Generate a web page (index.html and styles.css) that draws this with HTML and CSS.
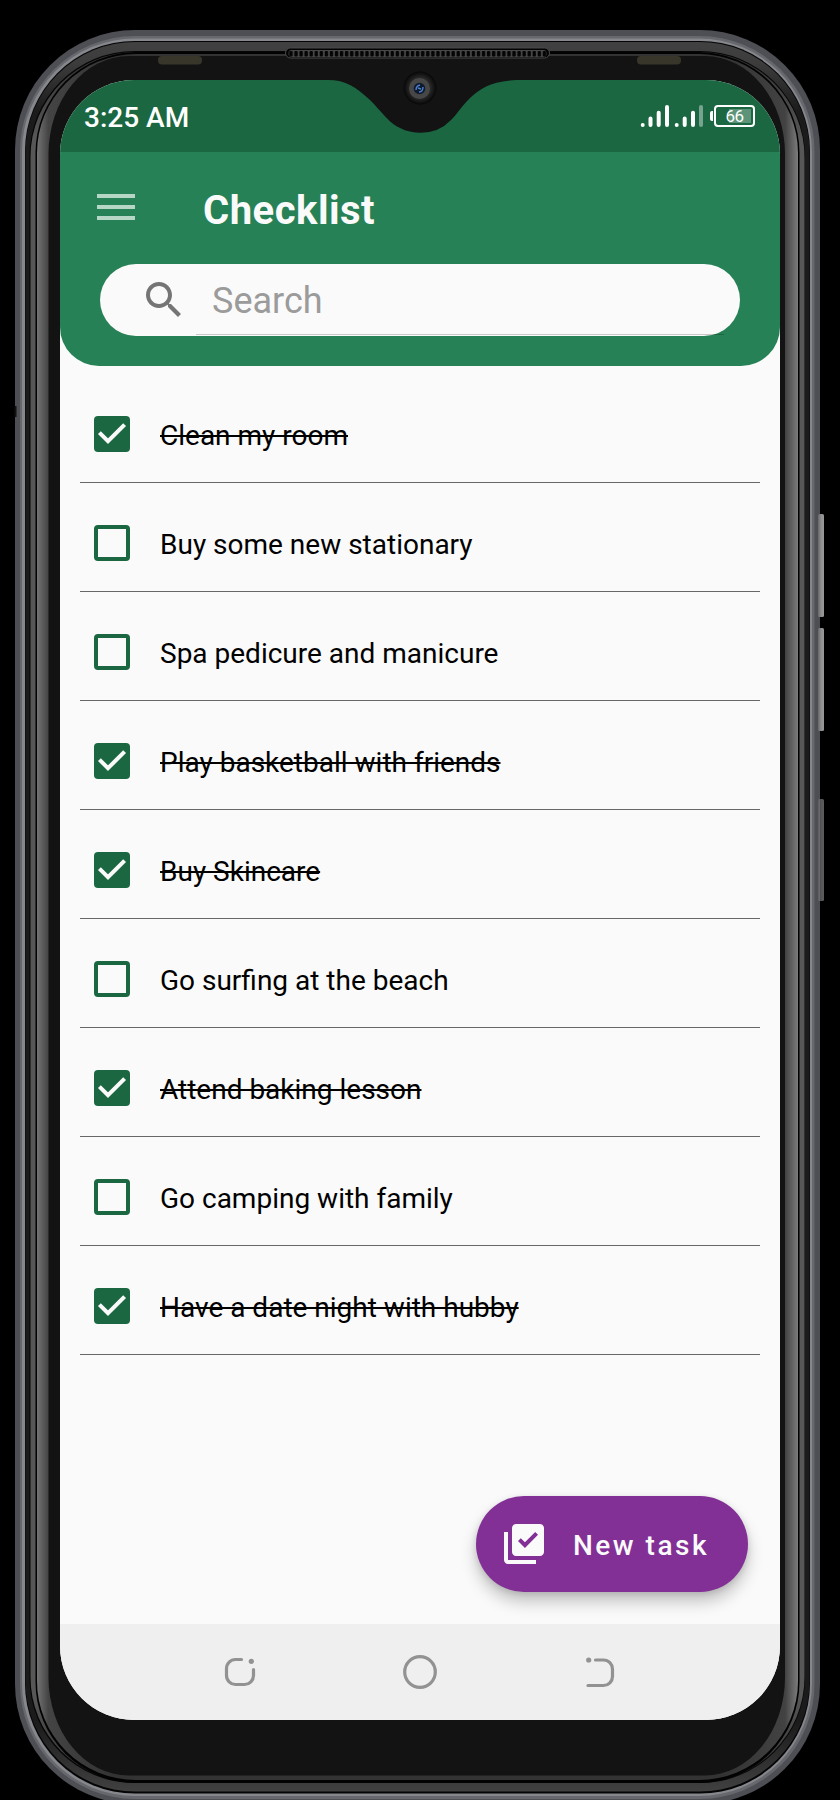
FILE: index.html
```html
<!DOCTYPE html>
<html lang="en">
<head>
<meta charset="utf-8">
<title>Checklist</title>
<link rel="stylesheet" href="styles.css">
</head>
<body>
<div class="phone">
  <svg class="frame" viewBox="0 0 840 1800" aria-hidden="true">
    <defs>
      <linearGradient id="rail" x1="0" y1="0" x2="0" y2="1"><stop offset="0" stop-color="#414141"/><stop offset=".012" stop-color="#3c3c3c"/><stop offset=".04" stop-color="#1b1b1b"/><stop offset=".96" stop-color="#1b1b1b"/><stop offset="1" stop-color="#404040"/></linearGradient>
      <linearGradient id="ring" x1="0" y1="0" x2="0" y2="1"><stop offset="0" stop-color="#303030"/><stop offset=".05" stop-color="#575757"/><stop offset=".95" stop-color="#575757"/><stop offset="1" stop-color="#303030"/></linearGradient>
      <linearGradient id="bevel" x1="0" y1="0" x2="1" y2="0"><stop offset="0" stop-color="#747474"/><stop offset=".015" stop-color="#444"/><stop offset=".1" stop-color="#333"/><stop offset=".9" stop-color="#333"/><stop offset=".983" stop-color="#424242"/><stop offset="1" stop-color="#7c7c7c"/></linearGradient>
      <linearGradient id="key" x1="0" y1="0" x2="1" y2="0"><stop offset="0" stop-color="#666"/><stop offset=".5" stop-color="#8e8e8e"/><stop offset="1" stop-color="#999"/></linearGradient>
      <radialGradient id="cam"><stop offset=".5" stop-color="#333"/><stop offset="1" stop-color="#070707"/></radialGradient>
      <pattern id="mesh" x="288.5" y="50" width="5.07" height="8" patternUnits="userSpaceOnUse"><rect width="5.07" height="8" fill="#474747"/><rect x=".7" y="1" width="3.4" height="5.4" rx="1" fill="#050505"/></pattern>
    </defs>
    <rect x="15" y="30" width="805" height="1774" rx="120" fill="#4e4f54"/>
    <rect x="20" y="36" width="794.5" height="1763" rx="115" fill="#66686e"/>
    <rect x="22" y="38.5" width="790" height="1757.5" rx="113" fill="#85878c"/>
    <g fill="url(#key)"><rect x="818" y="514" width="6" height="103" rx="1.5"/><rect x="818" y="628" width="6" height="103" rx="1.5"/><rect x="818" y="799" width="6" height="102" rx="1.5" opacity=".6"/></g>
    <rect x="25" y="41" width="785" height="1752.500" rx="110" fill="#050505"/>
    <rect x="25.500" y="42" width="784" height="1749.500" rx="110" fill="url(#rail)"/>
    <rect x="29.500" y="51" width="775.500" height="1732" rx="105" fill="#060606"/>
    <rect x="30.500" y="52" width="774" height="1730" rx="105" fill="url(#ring)"/>
    <rect x="35.500" y="52" width="764" height="1731" rx="101" fill="#020202"/>
    <rect x="37" y="54" width="761" height="1726" rx="99" fill="url(#bevel)"/>
    <rect x="48.500" y="56" width="736.500" height="1719.500" rx="80" ry="98" fill="#131313"/>
    <path d="M14.500 406h2v11h-2z" fill="#111"/>
    <g fill="#38362a"><rect x="158" y="56" width="44" height="8.500" rx="4"/><rect x="637" y="56" width="44" height="8.500" rx="4"/></g>
    <rect x="285.500" y="48" width="264" height="10" rx="5" fill="#030303" stroke="#4a4a4a"/>
    <rect x="288.500" y="50" width="258" height="7" rx="3" fill="url(#mesh)"/>
  </svg>

  <main class="screen">
    <header class="status">
      <span class="clock">3:25 AM</span>
      <div class="indicators">
        <svg class="signal" viewBox="0 0 64 24" aria-hidden="true"><g stroke="#fff" stroke-width="4" stroke-linecap="round"><path d="M3.700 21v.01M11.500 14.500V21M19.700 8.700V21M28 3V21M37.700 21v.01M45.700 14.500V21M54 8.700V21"/><path d="M62 3V21" opacity=".4"/></g></svg>
        <span class="battery">66</span>
      </div>
    </header>

    <section class="appbar">
      <div class="title-row">
        <div class="menu"><i></i><i></i><i></i></div>
        <h1 class="title">Checklist</h1>
      </div>
      <div class="search">
        <svg class="glass" viewBox="0 0 24 24" aria-hidden="true"><path d="M15.500 14h-.79l-.28-.27C15.410 12.590 16 11.110 16 9.500 16 5.910 13.090 3 9.500 3S3 5.910 3 9.500 5.910 16 9.500 16c1.610 0 3.090-.59 4.230-1.570l.27.28v.79l5 4.990L20.490 19l-4.990-5zm-6 0C7.010 14 5 11.990 5 9.500S7.010 5 9.500 5 14 7.010 14 9.500 11.990 14 9.500 14z"/></svg>
        <div class="field"><span class="placeholder">Search</span></div>
      </div>
    </section>

    <ul class="tasks">
      <li class="task done"><span class="box"><svg viewBox="3 3 18 18"><path d="M5.700 11.300 10 15.590 18.300 7.290"/></svg></span><span class="label">Clean my room</span></li>
      <li class="task"><span class="box"></span><span class="label">Buy some new stationary</span></li>
      <li class="task"><span class="box"></span><span class="label">Spa pedicure and manicure</span></li>
      <li class="task done"><span class="box"><svg viewBox="3 3 18 18"><path d="M5.700 11.300 10 15.590 18.300 7.290"/></svg></span><span class="label">Play basketball with friends</span></li>
      <li class="task done"><span class="box"><svg viewBox="3 3 18 18"><path d="M5.700 11.300 10 15.590 18.300 7.290"/></svg></span><span class="label">Buy Skincare</span></li>
      <li class="task"><span class="box"></span><span class="label">Go surfing at the beach</span></li>
      <li class="task done"><span class="box"><svg viewBox="3 3 18 18"><path d="M5.700 11.300 10 15.590 18.300 7.290"/></svg></span><span class="label">Attend baking lesson</span></li>
      <li class="task"><span class="box"></span><span class="label">Go camping with family</span></li>
      <li class="task done"><span class="box"><svg viewBox="3 3 18 18"><path d="M5.700 11.300 10 15.590 18.300 7.290"/></svg></span><span class="label">Have a date night with hubby</span></li>
    </ul>

    <button class="new-task">
      <svg class="add" viewBox="0 0 24 24" aria-hidden="true"><path d="M20 2H8c-1.100 0-2 .9-2 2v12c0 1.100.9 2 2 2h12c1.100 0 2-.9 2-2V4c0-1.100-.9-2-2-2zm-7.530 12L9 10.500l1.400-1.410 2.070 2.080L17.600 6 19 7.410 12.470 14zM4 6H2v14c0 1.100.9 2 2 2h14v-2H4V6z"/></svg>
      <span>New task</span>
    </button>

    <nav class="nav">
      <svg class="nav-icon" viewBox="0 0 36 36"><path d="M19.500 5.500h-6a9 9 0 0 0-9 9v7a9 9 0 0 0 9 9h9a9 9 0 0 0 9-9v-6"/><circle class="dot" cx="29.300" cy="7.300" r="2.600"/></svg>
      <svg class="nav-icon" viewBox="0 0 36 36"><circle cx="18" cy="18" r="15.300"/></svg>
      <svg class="nav-icon" viewBox="0 0 36 36"><path d="M13.500 6h8a9 9 0 0 1 9 9v7.500a9 9 0 0 1-9 9H6"/><circle class="dot" cx="6.700" cy="6" r="2.600"/></svg>
    </nav>
  </main>

  <svg class="notch" viewBox="0 0 200 66" aria-hidden="true">
    <path d="M8 0H197V10C172 11 161 18 150 28C141 37 138 43 131 50Q119 62.700 101 62.700C85 62.700 74 56 66.700 48C60 41 56 36 50 30C36 17 26 10 8 10z" fill="#131313"/>
    <circle cx="100" cy="18" r="16.500" fill="url(#cam)"/>
    <circle cx="99.500" cy="18.500" r="10.500" fill="#474747"/>
    <circle cx="99.500" cy="18.500" r="5.800" fill="#101a2c"/>
    <path d="M96 20q0-4 4-5M99 22q4 0 4-5M98 18l3 1" fill="none" stroke="#4a80cf" stroke-width="1.400"/>
  </svg>
</div>
</body>
</html>
```

FILE: styles.css
```css
* { box-sizing: border-box; }

body {
  margin: 0;
  background: #000;
  font-family: Roboto, "Liberation Sans", sans-serif;
}

.phone {
  position: relative;
  width: 840px;
  height: 1800px;
  padding: 80px 60px;
  overflow: hidden;
}

.frame {
  position: absolute;
  inset: 0;
  width: 840px;
  height: 1800px;
}

.notch {
  position: absolute;
  left: 320px;
  top: 70px;
  width: 200px;
  height: 66px;
}

.screen {
  position: relative;
  display: flex;
  flex-direction: column;
  height: 1640px;
  overflow: hidden;
  border-radius: 74px;
  background: #fafafa;
}

.status {
  display: flex;
  justify-content: space-between;
  height: 72px;
  padding: 0 25px 0 24px;
  background: #1b6742;
  color: #fff;
}

.clock {
  padding-top: 22px;
  font-size: 28px;
  line-height: 32px;
  font-weight: 500;
}

.indicators {
  display: flex;
  gap: 11px;
  padding-top: 25px;
}

.signal {
  width: 64px;
  height: 24px;
  margin-top: -1px;
}

.battery {
  position: relative;
  width: 41px;
  height: 22px;
  border: 2px solid #fff;
  border-radius: 4px;
  background: linear-gradient(#5d9479, #5d9479) 13px 2px / 22px 14px no-repeat;
  font-size: 17px;
  line-height: 19px;
  text-align: center;
  letter-spacing: -0.5px;
}

.battery::before {
  content: "";
  position: absolute;
  left: -6px;
  top: 4px;
  width: 3px;
  height: 10px;
  border-radius: 2px 0 0 2px;
  background: #fff;
}

.appbar {
  height: 214px;
  padding: 0 40px;
  border-radius: 0 0 39px 39px;
  background: #268156;
}

.title-row {
  display: flex;
  height: 112px;
  padding-left: -3px;
}

.menu {
  display: flex;
  flex-direction: column;
  gap: 7px;
  width: 38px;
  margin: 42px 0 0 -3px;
}

.menu i {
  height: 4px;
  background: #b6d6c6;
}

.title {
  margin: 35px 0 0 68px;
  color: #fafafa;
  font-size: 40px;
  line-height: 48px;
  font-weight: 700;
  letter-spacing: 0.5px;
}

.search {
  display: flex;
  height: 72px;
  padding: 0 16px 0 40px;
  border-radius: 36px;
  background: #fafafa;
}

.glass {
  width: 48px;
  height: 48px;
  margin-top: 12px;
  fill: #757575;
}

.field {
  flex: 1;
  height: 71px;
  margin-left: 8px;
  padding: 16px 0 0 16px;
  border-bottom: 1px solid rgba(0, 0, 0, 0.2);
}

.placeholder {
  display: block;
  color: #9b9b9b;
  font-size: 36px;
  line-height: 42px;
}

.tasks {
  margin: 0;
  padding: 8px 20px 0;
  list-style: none;
}

.task {
  display: flex;
  gap: 30px;
  height: 109px;
  padding: 42px 0 0 14px;
  border-bottom: 1px solid #676767;
}

.box {
  width: 36px;
  height: 36px;
  border: 4px solid #1b6742;
  border-radius: 4px;
}

.done .box {
  border: 0;
  background: #1b6742;
}

.box svg {
  display: block;
  width: 36px;
  height: 36px;
  fill: none;
  stroke: #fafafa;
  stroke-width: 2;
}

.label {
  padding-top: 4px;
  color: #000;
  font-size: 28px;
  line-height: 32px;
  white-space: nowrap;
}

.done .label {
  text-decoration: line-through;
  text-decoration-thickness: 2px;
}

.new-task {
  display: flex;
  align-items: center;
  align-self: flex-end;
  width: 272px;
  height: 96px;
  margin: auto 32px 32px 0;
  padding: 0 0 0 24px;
  border: 0;
  border-radius: 48px;
  background: #822f96;
  box-shadow: 0 10px 16px rgba(0, 0, 0, 0.22), 0 2px 6px rgba(0, 0, 0, 0.12);
  color: #fafafa;
  font: 500 28px/34px Roboto, "Liberation Sans", sans-serif;
  letter-spacing: 2.500px;
}

.new-task span {
  margin: 4px 0 0 25px;
  white-space: nowrap;
}

.add {
  width: 48px;
  height: 48px;
  fill: #fafafa;
}

.nav {
  display: flex;
  align-items: center;
  gap: 144px;
  height: 96px;
  flex: none;
  padding-left: 162px;
  background: #efefef;
}

.nav-icon {
  width: 36px;
  height: 36px;
  fill: none;
  stroke: #929292;
  stroke-width: 3.200;
  stroke-linecap: round;
}

.nav-icon .dot {
  fill: #929292;
  stroke: none;
}
```
